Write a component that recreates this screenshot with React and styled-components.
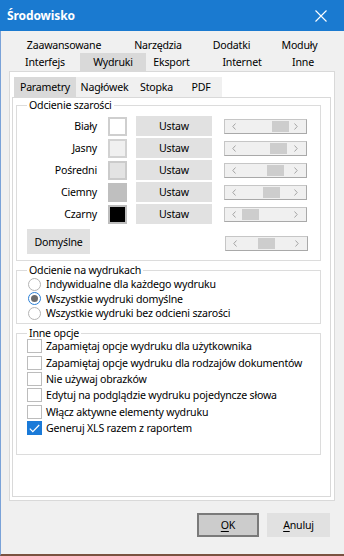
import React from "react";
import styled, { createGlobalStyle } from "styled-components";

const GlobalStyle = createGlobalStyle`
  body {
    margin: 0;
    background: #f0f0f0;
    font-family: "Noto Sans", "Open Sans", sans-serif;
    font-size: 10.6px;
    letter-spacing: -0.2px;
    color: #000;
  }
`;

const Window = styled.div`
  width: 344px;
  height: 556px;
  box-sizing: border-box;
  border-left: 1px solid #7aa2d8;
  border-bottom: 2px solid #7a5240;
  background: #f0f0f0;
  display: flex;
  flex-direction: column;
`;

const TitleBar = styled.div`
  height: 31px;
  flex: none;
  margin-left: -1px;
  background: #1a7ad0;
  color: #fff;
  display: flex;
  align-items: center;
  justify-content: space-between;
  padding: 0 17px 0 7px;
`;

const Title = styled.span`
  font-size: 12px;
  font-weight: 700;
  letter-spacing: -0.1px;
`;

const Body = styled.div`
  padding: 5px 9px 0 8px;
`;

const TabRow = styled.div`
  display: flex;
  margin-left: 1px;
  height: ${(p) => p.$h}px;
`;

const Tab = styled.div`
  width: ${(p) => p.$w}px;
  flex: none;
  display: flex;
  align-items: center;
  justify-content: center;
  white-space: nowrap;
  background: ${(p) => (p.$active ? "#d9d9d9" : "transparent")};
`;

const Panel = styled.div`
  height: 430px;
  box-sizing: border-box;
  background: #fff;
  border: 1px solid #d9d9d9;
  padding: 5px 0 0 2px;
`;

const SubTabRow = styled.div`
  display: flex;
  margin-left: 2px;
  height: 20px;
`;

const SubTab = styled.div`
  width: ${(p) => p.$w}px;
  display: flex;
  align-items: center;
  justify-content: center;
  white-space: nowrap;
  background: ${(p) => (p.$active ? "#d9d9d9" : "#f0f0f0")};
`;

const SubPanel = styled.div`
  width: 319px;
  height: 400px;
  box-sizing: border-box;
  border: 1px solid #d9d9d9;
  padding: 0 9px 0 3px;
`;

const Group = styled.fieldset`
  margin: ${(p) => p.$mt}px 0 0;
  padding: ${(p) => p.$pt}px 0 ${(p) => p.$pb}px;
  border: 1px solid #dcdcdc;
  min-width: 0;
`;

const Legend = styled.legend`
  margin-left: 10px;
  padding: 0 2px;
  line-height: 12px;
`;

const ShadeRow = styled.div`
  display: flex;
  align-items: center;
  height: 20px;
  margin-bottom: 2px;
`;

const ShadeLabel = styled.span`
  width: 80px;
  margin-right: 11px;
  text-align: right;
`;

const Swatch = styled.div`
  width: 19px;
  height: 19px;
  box-sizing: border-box;
  margin-right: 9px;
  background: ${(p) => p.$fill};
  border: 2px solid ${(p) => p.$edge};
`;

const Button = styled.div`
  width: ${(p) => p.$w}px;
  height: ${(p) => p.$h}px;
  box-sizing: border-box;
  flex: none;
  display: flex;
  align-items: center;
  justify-content: center;
  background: ${(p) => (p.$default ? "#cccccc" : "#e1e1e1")};
  border: ${(p) => (p.$default ? "2px solid #7a7a7a" : "1px solid #e1e1e1")};
`;

const SetButton = styled(Button)`
  margin-right: 12px;
`;

const DefaultRow = styled.div`
  display: flex;
  align-items: flex-end;
  justify-content: space-between;
  margin-top: 5px;
  padding: 0 12px 0 10px;
`;

const ScrollTrack = styled.div`
  position: relative;
  width: 83px;
  height: 15px;
  box-sizing: border-box;
  flex: none;
  background: #f0f0f0;
  border: 1px solid #c6c6c6;
  border-right-color: #a9a9a9;
  border-bottom-color: #a9a9a9;
  display: flex;
  align-items: center;
  justify-content: space-between;
  padding: 0 8px 0 7px;
  margin-bottom: ${(p) => (p.$lift ? 3 : 0)}px;
`;

const Thumb = styled.div`
  position: absolute;
  top: 1px;
  width: 17px;
  height: 11px;
  background: #cdcdcd;
`;

const RadioList = styled.div`
  padding-left: 11px;
`;

const OptionRow = styled.label`
  display: flex;
  align-items: center;
  white-space: nowrap;
  height: ${(p) => p.$h}px;
`;

const RadioMark = styled.span`
  width: 13px;
  height: 13px;
  box-sizing: border-box;
  border-radius: 50%;
  margin-right: 5px;
  background: #fff;
  border: ${(p) => (p.$on ? "1.5px solid #2b80d6" : "1px solid #b4b4b4")};
  display: flex;
  align-items: center;
  justify-content: center;
  &::after {
    content: "";
    display: ${(p) => (p.$on ? "block" : "none")};
    width: 7px;
    height: 7px;
    border-radius: 50%;
    background: #6c6c6c;
  }
`;

const CheckList = styled.div`
  margin-top: -1px;
  height: 116px;
  padding-left: 10px;
`;

const CheckMark = styled.span`
  width: 15px;
  height: 14px;
  box-sizing: border-box;
  margin-right: 4px;
  flex: none;
  background: ${(p) => (p.$on ? "#1a7ad8" : "#fff")};
  border: 1px solid ${(p) => (p.$on ? "#1a7ad8" : "#bcbcbc")};
  display: flex;
  align-items: center;
  justify-content: center;
`;

const Footer = styled.div`
  display: flex;
  justify-content: flex-end;
  gap: 8px;
  margin-top: 12px;
  padding-right: 5px;
`;

const Key = styled.span`
  text-decoration: underline;
  text-underline-offset: 2px;
`;

const shades = [
  { name: "Biały", fill: "#ffffff", edge: "#cfcfcf", pos: 48 },
  { name: "Jasny", fill: "#f0f0f0", edge: "#d2d2d2", pos: 46 },
  { name: "Pośredni", fill: "#e3e3e3", edge: "#cbcbcb", pos: 43 },
  { name: "Ciemny", fill: "#bfbfbf", edge: "#bfbfbf", pos: 39 },
  { name: "Czarny", fill: "#000000", edge: "#bdbdbd", pos: 18 },
];

const radios = [
  "Indywidualne dla każdego wydruku",
  "Wszystkie wydruki domyślne",
  "Wszystkie wydruki bez odcieni szarości",
];

const options = [
  ["Zapamiętaj opcje wydruku dla użytkownika", false],
  ["Zapamiętaj opcje wydruku dla rodzajów dokumentów", false],
  ["Nie używaj obrazków", false],
  ["Edytuj na podglądzie wydruku pojedyncze słowa", false],
  ["Włącz aktywne elementy wydruku", false],
  ["Generuj XLS razem z raportem", true],
];

function Chevron({ dir }) {
  return (
    <svg width="4" height="7" viewBox="0 0 4 7">
      <path
        d={dir === "left" ? "M3.5 0.5 L0.8 3.5 L3.5 6.5" : "M0.5 0.5 L3.2 3.5 L0.5 6.5"}
        fill="none"
        stroke="#a4a4a4"
        strokeWidth="1"
      />
    </svg>
  );
}

function Scroll({ pos, lift }) {
  return (
    <ScrollTrack $lift={lift}>
      <Chevron dir="left" />
      <Thumb style={{ left: pos - 1 }} />
      <Chevron dir="right" />
    </ScrollTrack>
  );
}

export default function App() {
  return (
    <Window>
      <GlobalStyle />
      <TitleBar>
        <Title>Środowisko</Title>
        <svg width="12" height="12" viewBox="0 0 12 12">
          <path d="M0.5 0.5 L11.5 11.5 M11.5 0.5 L0.5 11.5" stroke="#fff" strokeWidth="1.1" />
        </svg>
      </TitleBar>
      <Body>
        <TabRow $h={17}>
          <Tab $w={108}>Zaawansowane</Tab>
          <Tab $w={80}>Narzędzia</Tab>
          <Tab $w={67}>Dodatki</Tab>
          <Tab $w={69}>Moduły</Tab>
        </TabRow>
        <TabRow $h={18}>
          <Tab $w={70}>Interfejs</Tab>
          <Tab $w={66} $active>
            Wydruki
          </Tab>
          <Tab $w={51}>Eksport</Tab>
          <Tab $w={90}>Internet</Tab>
          <Tab $w={32}>Inne</Tab>
        </TabRow>
        <Panel>
          <SubTabRow>
            <SubTab $w={62} $active>
              Parametry
            </SubTab>
            <SubTab $w={57}>Nagłówek</SubTab>
            <SubTab $w={47}>Stopka</SubTab>
            <SubTab $w={42}>PDF</SubTab>
          </SubTabRow>
          <SubPanel>
            <Group $mt={1} $pt={5} $pb={6}>
              <Legend>Odcienie szarości</Legend>
              {shades.map((s) => (
                <ShadeRow key={s.name}>
                  <ShadeLabel>{s.name}</ShadeLabel>
                  <Swatch $fill={s.fill} $edge={s.edge} />
                  <SetButton $w={76} $h={20}>
                    Ustaw
                  </SetButton>
                  <Scroll pos={s.pos} />
                </ShadeRow>
              ))}
              <DefaultRow>
                <Button $w={63} $h={25}>
                  Domyślne
                </Button>
                <Scroll pos={33} lift />
              </DefaultRow>
            </Group>
            <Group $mt={3} $pt={1} $pb={2.5}>
              <Legend>Odcienie na wydrukach</Legend>
              <RadioList>
                {radios.map((r, i) => (
                  <OptionRow key={r} $h={14.5}>
                    <RadioMark $on={i === 1} />
                    {r}
                  </OptionRow>
                ))}
              </RadioList>
            </Group>
            <Group $mt={3} $pt={0} $pb={0}>
              <Legend>Inne opcje</Legend>
              <CheckList>
                {options.map(([text, on]) => (
                  <OptionRow key={text} $h={16.4}>
                    <CheckMark $on={on}>
                      {on && (
                        <svg width="11" height="9" viewBox="0 0 11 9">
                          <path d="M0.8 4.6 L3.8 7.6 L10.2 1" fill="none" stroke="#fff" strokeWidth="1.2" />
                        </svg>
                      )}
                    </CheckMark>
                    {text}
                  </OptionRow>
                ))}
              </CheckList>
            </Group>
          </SubPanel>
        </Panel>
        <Footer>
          <Button $w={62} $h={24} $default>
            <Key>O</Key>K
          </Button>
          <Button $w={63} $h={24}>
            <Key>A</Key>nuluj
          </Button>
        </Footer>
      </Body>
    </Window>
  );
}
